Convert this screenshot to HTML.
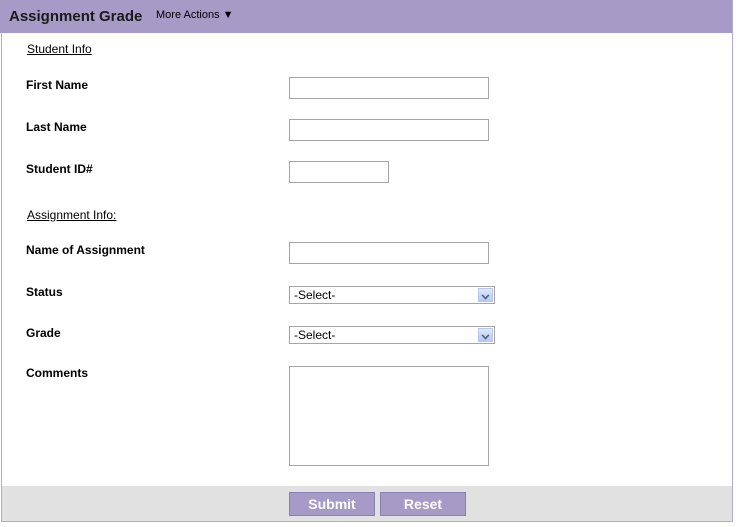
<!DOCTYPE html>
<html><head><style>
*{margin:0;padding:0;box-sizing:border-box}
body{width:743px;height:527px;background:#fff;font-family:"Liberation Sans",Arial,sans-serif;position:relative;overflow:hidden}
#box{position:absolute;left:1px;top:0;width:732px;height:522px;border:1px solid #b4abd2;border-top:none}
#hd{position:absolute;left:0;top:0;width:732px;height:33px;background:#a69bc6}
.a{position:absolute;font-size:12px;color:#000}
.b{font-weight:bold}
.u{text-decoration:underline}
.in{position:absolute;border:1px solid #a5a5a5;background:#fff}
.sel{position:absolute;border:1px solid #a5a5a5;background:#fff;font-size:12px;padding-left:4px;line-height:16px}
.arr{position:absolute;right:1px;top:1px;width:15px;height:14px;background:linear-gradient(#dfe8fb,#b4c8f3);border:1px solid #b9c9ee}
.arr:after{content:"";position:absolute;left:3px;top:3px;width:5px;height:5px;border-right:2px solid #4d6185;border-bottom:2px solid #4d6185;transform:rotate(45deg) scale(.8)}
#ft{position:absolute;left:2px;top:486px;width:730px;height:35px;background:#e1e1e1}
.btn{position:absolute;top:492px;width:86px;height:24px;background:#a69bc6;border:1px solid #8a7fb3;color:#fff;font-weight:bold;font-size:14px;text-align:center;line-height:22px}
</style></head><body>
<div id="box"></div>
<div id="hd"></div>
<div class="a b" style="left:9px;top:8px;font-size:15px;color:#1a1a1a">Assignment Grade</div>
<div class="a" style="left:156px;top:9px;font-size:11px">More Actions ▼</div>
<div class="a u" style="left:27px;top:42px">Student Info</div>
<div class="a b" style="left:26px;top:78px">First Name</div>
<div class="in" style="left:289px;top:77px;width:200px;height:22px"></div>
<div class="a b" style="left:26px;top:120px">Last Name</div>
<div class="in" style="left:289px;top:119px;width:200px;height:22px"></div>
<div class="a b" style="left:26px;top:162px">Student ID#</div>
<div class="in" style="left:289px;top:161px;width:100px;height:22px"></div>
<div class="a u" style="left:27px;top:208px">Assignment Info:</div>
<div class="a b" style="left:26px;top:243px">Name of Assignment</div>
<div class="in" style="left:289px;top:242px;width:200px;height:22px"></div>
<div class="a b" style="left:26px;top:285px">Status</div>
<div class="sel" style="left:289px;top:286px;width:206px;height:18px">-Select-<span class="arr"></span></div>
<div class="a b" style="left:26px;top:326px">Grade</div>
<div class="sel" style="left:289px;top:326px;width:206px;height:18px">-Select-<span class="arr"></span></div>
<div class="a b" style="left:26px;top:366px">Comments</div>
<div class="in" style="left:289px;top:366px;width:200px;height:100px"></div>
<div id="ft"></div>
<div class="btn" style="left:289px">Submit</div>
<div class="btn" style="left:380px">Reset</div>
</body></html>
